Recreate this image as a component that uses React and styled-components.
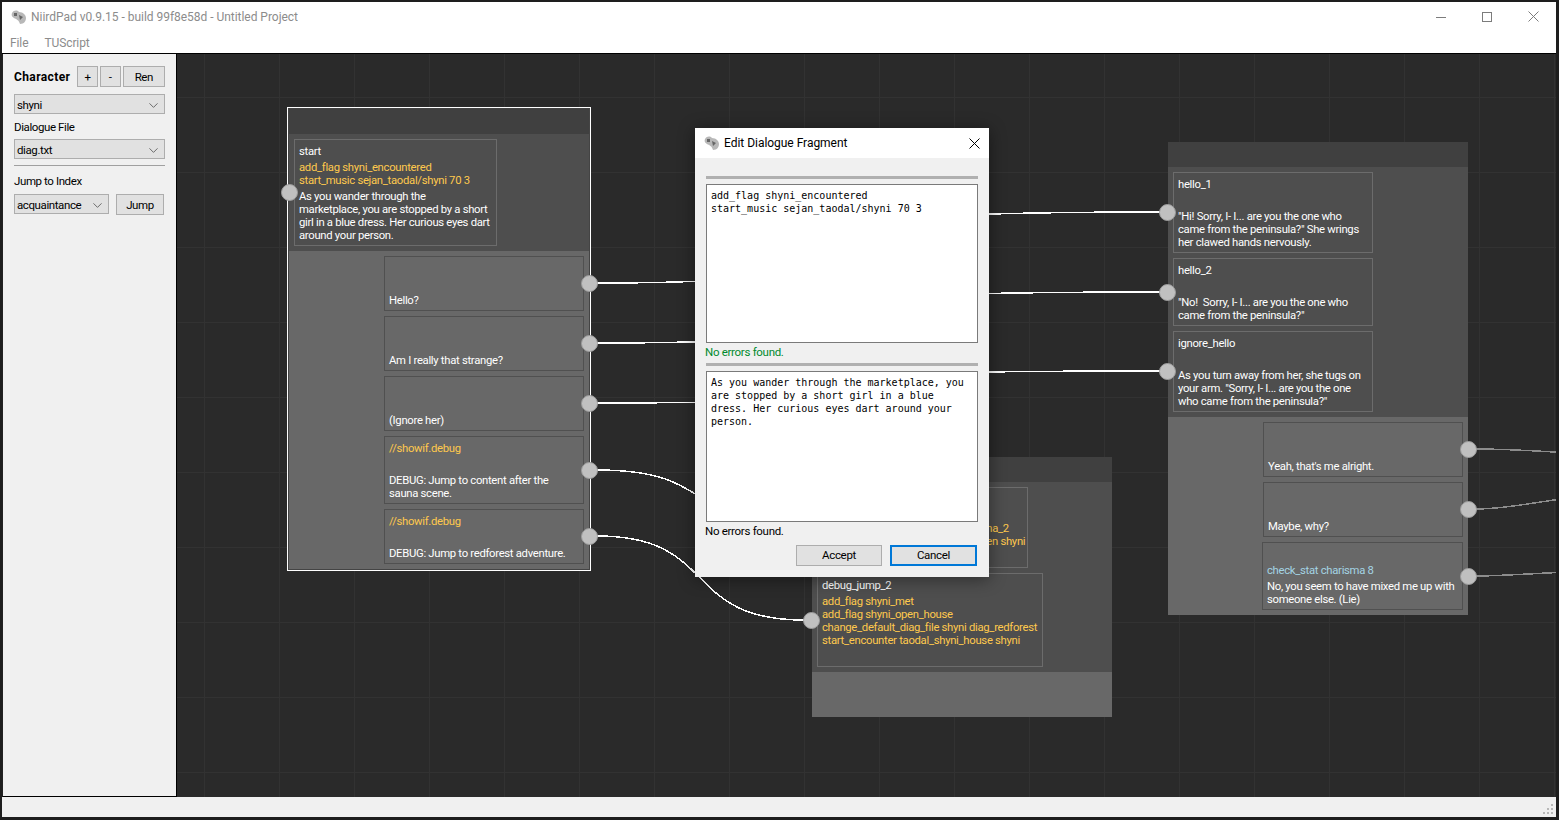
import React from 'react'
import styled, { createGlobalStyle } from 'styled-components'
import { ChevronDown } from 'lucide-react'

const UI_FONT = `'Roboto', 'Liberation Sans', sans-serif`

const GlobalStyle = createGlobalStyle`
  html, body {
    margin: 0;
    padding: 0;
    background-color: #1e1e1e;
  }
  * {
    box-sizing: border-box;
  }
`

const Desktop = styled.div`
  position: relative;
  width: 1559px;
  height: 820px;
  padding: 2px 3px 3px 2px;
  overflow: hidden;
  background-color: #1e1e1e;
  font-family: ${UI_FONT};
  font-size: 12px;
  line-height: 13px;
`

const Window = styled.div`
  display: flex;
  flex-flow: column nowrap;
  height: 100%;
  background-color: #f0f0f0;
`

const TitleBar = styled.div`
  display: flex;
  align-items: center;
  height: 29px;
  padding-left: 9px;
  background-color: #fff;
  color: #8c8c8c;
  flex: none;
`

const TitleText = styled.div`
  margin-left: 4px;
  padding-top: 1px;
  flex: 1;
  letter-spacing: -0.03px;
`

const WindowButtons = styled.div`
  display: flex;
  align-items: center;
  color: #7c7c7c;
`

const WindowButton = styled.div`
  width: ${props => props.$w || 46}px;
  display: flex;
  justify-content: center;
`

const MenuBar = styled.div`
  display: flex;
  align-items: center;
  gap: 16px;
  height: 22px;
  padding: 2px 0 0 8px;
  background-color: #fff;
  color: #8c8c8c;
  flex: none;
  letter-spacing: -0.1px;
`

const Main = styled.div`
  display: flex;
  flex: 1;
  min-height: 0;
  border-top: 1px solid #000;
`

const Sidebar = styled.div`
  width: 175px;
  flex: none;
  padding: 12px 11px 0 11px;
  background-color: #f0f0f0;
  border-left: 1px solid #222;
  border-right: 1px solid #000;
  border-bottom: 1px solid #000;
  color: #000;
  font-size: 11.5px;
  letter-spacing: -0.4px;
`

const Row = styled.div`
  display: flex;
  align-items: flex-start;
  gap: 2px;
`

const Heading = styled.div`
  font-size: 12px;
  font-weight: bold;
  letter-spacing: 0.4px;
  width: 62px;
  padding-top: 5px;
`

const Button = styled.div`
  display: flex;
  align-items: center;
  justify-content: center;
  width: ${props => props.$w}px;
  height: 21px;
  padding-top: 1px;
  background-color: #e1e1e1;
  border: 1px solid #adadad;
`

const Select = styled.div`
  display: flex;
  align-items: center;
  justify-content: space-between;
  width: ${props => props.$w}px;
  height: 20px;
  padding: 2px 3px 0 2px;
  background-color: #e1e1e1;
  border: 1px solid #adadad;
`

const Label = styled.div`
  margin: ${props => props.$m};
`

const Rule = styled.div`
  height: 1px;
  margin: 6px 0 9px;
  background-color: #a0a0a0;
`

const Canvas = styled.div`
  position: relative;
  flex: 1;
  overflow: hidden;
  background-color: #2a2a2a;
  background-image:
    linear-gradient(to right, #323232 1px, transparent 1px),
    linear-gradient(to bottom, #323232 1px, transparent 1px);
  background-size: 75px 75px;
  background-position: 27px 43px;
  font-size: 11.3px;
  letter-spacing: -0.3px;
`

const Wires = styled.svg`
  position: absolute;
  left: 0;
  top: 0;
`

const Node = styled.div`
  position: absolute;
  left: ${props => props.$x - 177}px;
  top: ${props => props.$y - 54}px;
  width: 300px;
  color: #fff;
  ${props => props.$selected && `box-shadow: 0 0 0 1px #444, 0 0 0 2px #fff;`}
`

const NodeHeader = styled.div`
  height: 25px;
  background-color: #404040;
`

const Fragments = styled.div`
  display: flex;
  flex-flow: column nowrap;
  gap: 5px;
  padding: 5px;
  background-color: #4e4e4e;
`

const Options = styled.div`
  display: flex;
  flex-flow: column nowrap;
  align-items: flex-end;
  gap: 5px;
  padding: 5px;
  min-height: 45px;
  background-color: #686868;
`

const Fragment = styled.div`
  display: flex;
  flex-flow: column nowrap;
  gap: 3px;
  width: ${props => props.$w || 200}px;
  padding: 5px 4px 3px;
  white-space: pre-wrap;
  border: 1px solid #6c6c6c;
`

const Option = styled(Fragment)`
  border-color: #505050;
`

const Line = styled.div`
  min-height: 13px;
`

const Script = styled(Line)`
  color: #ffc94d;
  white-space: pre;
`

const Check = styled(Line)`
  color: #a4d4e4;
`

const Pin = styled.div`
  position: absolute;
  left: ${props => props.$x - 177 - 8}px;
  top: ${props => props.$y - 54 - 8}px;
  width: 17px;
  height: 17px;
  border-radius: 50%;
  background-color: #c0c0c0;
  border: 1px solid #9c9c9c;
`

const StatusBar = styled.div`
  position: relative;
  height: 20px;
  flex: none;
  background-color: #f0f0f0;
`

const Grip = styled.svg`
  position: absolute;
  right: 3px;
  bottom: 3px;
`

const Dialog = styled.div`
  position: absolute;
  left: 695px;
  top: 128px;
  width: 294px;
  height: 449px;
  display: flex;
  flex-flow: column nowrap;
  background-color: #f0f0f0;
  box-shadow: 0 2px 16px rgba(0, 0, 0, 0.45);
`

const DialogTitle = styled.div`
  display: flex;
  align-items: center;
  height: 30px;
  padding-left: 9px;
  background-color: #fff;
  color: #000;
`

const DialogBody = styled.div`
  display: flex;
  flex-flow: column nowrap;
  padding: 18px 11px 0;
  color: #000;
  font-size: 11.5px;
  letter-spacing: -0.3px;
`

const Divider = styled.div`
  height: 3px;
  margin-bottom: 5px;
  background-color: #b0b0b0;
`

const TextBox = styled.div`
  height: ${props => props.$h}px;
  padding: 4px;
  background-color: #fff;
  border: 1px solid #7a7a7a;
  font-family: 'DejaVu Sans Mono', monospace;
  font-size: 10px;
  letter-spacing: 0;
  line-height: 13px;
  white-space: pre-wrap;
`

const Status = styled.div`
  height: 20px;
  margin-left: -1px;
  padding-bottom: 2px;
  display: flex;
  align-items: center;
  color: ${props => props.$ok ? '#008a2e' : '#000'};
`

const DialogButtons = styled.div`
  display: flex;
  justify-content: flex-end;
  gap: 8px;
  margin-top: 3px;
  padding-right: 1px;
`

const DialogButton = styled.div`
  display: flex;
  align-items: center;
  justify-content: center;
  width: ${props => props.$w}px;
  height: 21px;
  background-color: #e1e1e1;
  border: ${props => props.$focus ? '2px solid #0078d7' : '1px solid #adadad'};
`

function AppIcon () {
  return (
    <svg width="16" height="14" viewBox="0 0 16 14">
      <path d="M1 3 C3 0 6 0 8 2 C12 2 15 5 15 8 C15 11 13 14 9 14 C8 10 5 9 3 8 C1 7 0 5 1 3 Z" fill="#b8b8b8" />
      <path d="M3 3 L6 3 L6 6 L3 6 Z M8 5 L12 7 L9 10 Z" fill="#666" />
    </svg>
  )
}

function Chevron () {
  return <ChevronDown size={15} color="#444" strokeWidth={1.2} />
}

function CrossIcon ({ color }) {
  return (
    <svg width="11" height="11" viewBox="0 0 11 11">
      <path d="M0.5 0.5 L10.5 10.5 M10.5 0.5 L0.5 10.5" stroke={color} strokeWidth="1" fill="none" />
    </svg>
  )
}

const whiteWires = [
  'M597 283 C 1047 283, 480 212, 1160 212',
  'M597 343 C 1047 343, 480 292, 1160 292',
  'M597 403 C 1047 403, 480 371, 1160 371',
  'M597 470 C 720 470, 680 524, 804 524',
  'M597 536 C 720 536, 680 620, 804 620',
]

const grayWires = [
  'M1476 449 C 1520 449, 1540 452, 1600 454',
  'M1476 509 C 1510 509, 1530 502, 1600 494',
  'M1476 576 C 1500 576, 1530 574, 1600 570',
]

export default function App () {
  return (
    <Desktop>
      <GlobalStyle />
      <Window>
        <TitleBar>
          <AppIcon />
          <TitleText>NiirdPad v0.9.15 - build 99f8e58d - Untitled Project</TitleText>
          <WindowButtons>
            <WindowButton>
              <svg width="10" height="10" viewBox="0 0 10 10"><path d="M0 5.5 H10" stroke="currentColor" /></svg>
            </WindowButton>
            <WindowButton>
              <svg width="10" height="10" viewBox="0 0 10 10"><rect x="0.5" y="0.5" width="9" height="9" fill="none" stroke="currentColor" /></svg>
            </WindowButton>
            <WindowButton>
              <CrossIcon color="currentColor" />
            </WindowButton>
          </WindowButtons>
        </TitleBar>
        <MenuBar>
          <div>File</div>
          <div>TUScript</div>
        </MenuBar>
        <Main>
          <Sidebar>
            <Row>
              <Heading>Character</Heading>
              <Button $w={21}>+</Button>
              <Button $w={21}>-</Button>
              <Button $w={43}>Ren</Button>
            </Row>
            <Label $m="7px 0 0">
              <Select $w={151}>shyni<Chevron /></Select>
            </Label>
            <Label $m="7px 0 5px">Dialogue File</Label>
            <Select $w={151}>diag.txt<Chevron /></Select>
            <Rule />
            <Label $m="0 0 6px">Jump to Index</Label>
            <Row>
              <Select $w={95}>acquaintance<Chevron /></Select>
              <Label $m="0 0 0 5px">
                <Button $w={48}>Jump</Button>
              </Label>
            </Row>
          </Sidebar>
          <Canvas>
            <Wires width="1379" height="743" viewBox="177 54 1379 743">
              {whiteWires.map(d => (
                <path key={d} d={d} fill="none" stroke="#fff" strokeWidth="1.5" shapeRendering="crispEdges" />
              ))}
              {grayWires.map(d => (
                <path key={d} d={d} fill="none" stroke="#8c8c8c" strokeWidth="1.5" shapeRendering="crispEdges" />
              ))}
            </Wires>

            <Node $x={289} $y={109} $selected>
              <NodeHeader />
              <Fragments>
                <Fragment $w={203}>
                  <Line>start</Line>
                  <Script>{'add_flag shyni_encountered\nstart_music sejan_taodal/shyni 70 3'}</Script>
                  <Line>{'As you wander through the\nmarketplace, you are stopped by a short\ngirl in a blue dress. Her curious eyes dart\naround your person.'}</Line>
                </Fragment>
              </Fragments>
              <Options>
                <Option><Line /><Line /><Line>Hello?</Line></Option>
                <Option><Line /><Line /><Line>Am I really that strange?</Line></Option>
                <Option><Line /><Line /><Line>(Ignore her)</Line></Option>
                <Option>
                  <Script>//showif.debug</Script>
                  <Line />
                  <Line>DEBUG: Jump to content after the sauna scene.</Line>
                </Option>
                <Option>
                  <Script>//showif.debug</Script>
                  <Line />
                  <Line>DEBUG: Jump to redforest adventure.</Line>
                </Option>
              </Options>
            </Node>

            <Node $x={812} $y={457}>
              <NodeHeader />
              <Fragments>
                <Fragment $w={211}>
                  <Line>debug_jump_1</Line>
                  <Script>{'add_flag shyni_met\nchange_default_diag_file shyni sauna_2\nstart_encounter taodal_shyni_h_open shyni'}</Script>
                  <Line />
                </Fragment>
                <Fragment $w={226}>
                  <Line>debug_jump_2</Line>
                  <Script>{'add_flag shyni_met\nadd_flag shyni_open_house\nchange_default_diag_file shyni diag_redforest\nstart_encounter taodal_shyni_house shyni'}</Script>
                  <Line />
                </Fragment>
              </Fragments>
              <Options />
            </Node>

            <Node $x={1168} $y={142}>
              <NodeHeader />
              <Fragments>
                <Fragment>
                  <Line>hello_1</Line>
                  <Line />
                  <Line>"Hi! Sorry, I- I... are you the one who came from the peninsula?" She wrings her clawed hands nervously.</Line>
                </Fragment>
                <Fragment>
                  <Line>hello_2</Line>
                  <Line />
                  <Line>"No!  Sorry, I- I... are you the one who came from the peninsula?"</Line>
                </Fragment>
                <Fragment>
                  <Line>ignore_hello</Line>
                  <Line />
                  <Line>As you turn away from her, she tugs on your arm. "Sorry, I- I... are you the one who came from the peninsula?"</Line>
                </Fragment>
              </Fragments>
              <Options>
                <Option><Line /><Line /><Line>Yeah, that's me alright.</Line></Option>
                <Option><Line /><Line /><Line>Maybe, why?</Line></Option>
                <Option $w={201}>
                  <Line />
                  <Check>check_stat charisma 8</Check>
                  <Line>No, you seem to have mixed me up with someone else. (Lie)</Line>
                </Option>
              </Options>
            </Node>

            <Pin $x={289} $y={192} />
            <Pin $x={589} $y={283} />
            <Pin $x={589} $y={343} />
            <Pin $x={589} $y={403} />
            <Pin $x={589} $y={470} />
            <Pin $x={589} $y={536} />
            <Pin $x={811} $y={620} />
            <Pin $x={1167} $y={212} />
            <Pin $x={1167} $y={292} />
            <Pin $x={1167} $y={371} />
            <Pin $x={1468} $y={449} />
            <Pin $x={1468} $y={509} />
            <Pin $x={1468} $y={576} />
          </Canvas>
        </Main>
        <StatusBar>
          <Grip width="10" height="10" viewBox="0 0 10 10">
            <path d="M8 0h2v2H8zM4 4h2v2H4zM8 4h2v2H8zM0 8h2v2H0zM4 8h2v2H4zM8 8h2v2H8z" fill="#b8b8b8" />
          </Grip>
        </StatusBar>
      </Window>

      <Dialog>
        <DialogTitle>
          <AppIcon />
          <TitleText>Edit Dialogue Fragment</TitleText>
          <WindowButton $w={30}><CrossIcon color="#000" /></WindowButton>
        </DialogTitle>
        <DialogBody>
          <Divider />
          <TextBox $h={159}>{'add_flag shyni_encountered\nstart_music sejan_taodal/shyni 70 3'}</TextBox>
          <Status $ok>No errors found.</Status>
          <Divider />
          <TextBox $h={151}>As you wander through the marketplace, you are stopped by a short girl in a blue dress. Her curious eyes dart around your person.</TextBox>
          <Status>No errors found.</Status>
          <DialogButtons>
            <DialogButton $w={86}>Accept</DialogButton>
            <DialogButton $w={87} $focus>Cancel</DialogButton>
          </DialogButtons>
        </DialogBody>
      </Dialog>
    </Desktop>
  )
}
